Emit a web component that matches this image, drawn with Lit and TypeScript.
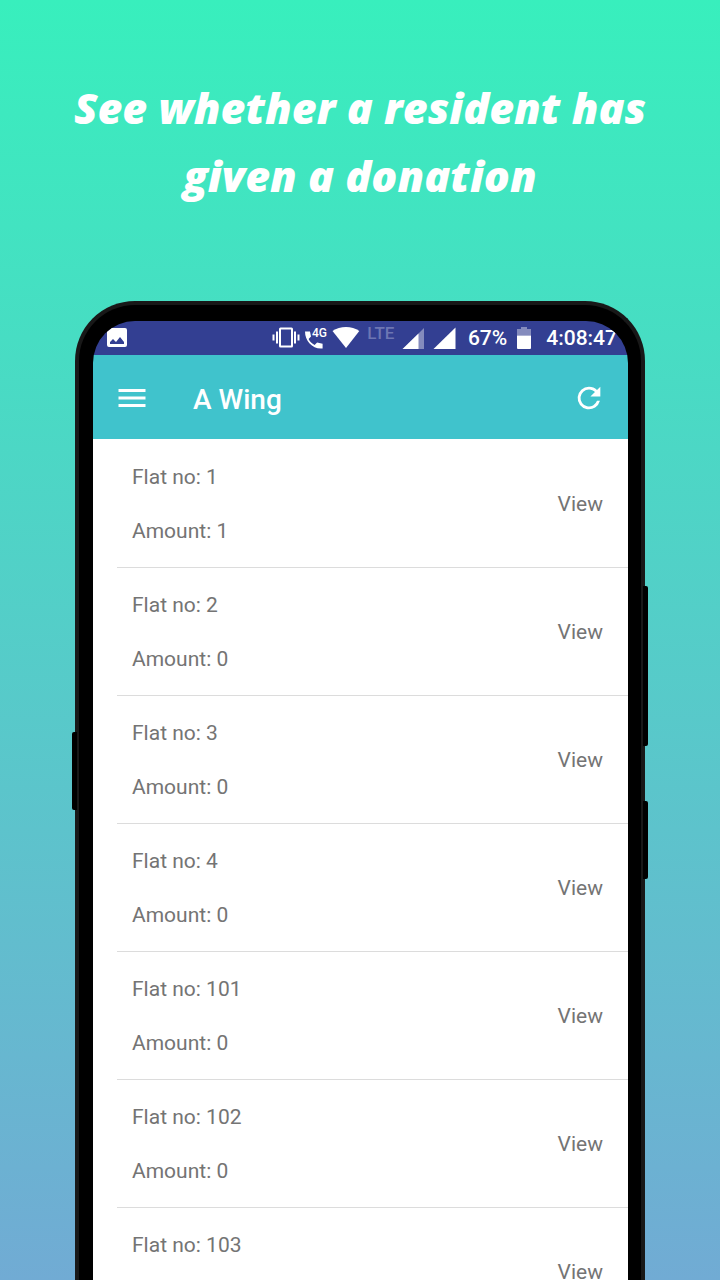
import { LitElement, html, css } from "lit";
import { customElement, property } from "lit/decorators.js";

interface Flat {
  no: string;
  amount: number;
}

const FLATS: Flat[] = [
  { no: "1", amount: 1 },
  { no: "2", amount: 0 },
  { no: "3", amount: 0 },
  { no: "4", amount: 0 },
  { no: "101", amount: 0 },
  { no: "102", amount: 0 },
  { no: "103", amount: 0 },
];

@customElement("status-bar")
class StatusBar extends LitElement {
  static styles = css`
    :host {
      display: flex;
      align-items: center;
      height: 34px;
      padding: 0 11px 0 14px;
      background: #333f92;
      color: #fff;
      font-size: 21px;
      font-weight: 500;
      line-height: 34px;
      white-space: nowrap;
    }
    svg {
      display: block;
      flex: none;
      fill: #fff;
    }
    .tray {
      display: flex;
      align-items: center;
      gap: 4px;
      margin-left: auto;
    }
    .lte {
      align-self: flex-start;
      width: 34px;
      line-height: 24px;
      text-align: center;
      font-size: 17px;
      color: #6d76b3;
    }
    .percent {
      padding: 0 5px 0 8px;
    }
    .time {
      padding-left: 10px;
    }
    .small {
      font-size: 12px;
      font-weight: 500;
    }
  `;

  render() {
    return html`
      <svg width="20" height="24" viewBox="0 0 20 24" aria-hidden="true">
        <path fill-rule="evenodd" d="M2 2h16a2 2 0 0 1 2 2v15a2 2 0 0 1-2 2H2a2 2 0 0 1-2-2V4a2 2 0 0 1 2-2zM3 18h14v-2l-4-5-4 5-3-3-3 3z" />
      </svg>
      <div class="tray">
        <svg width="28" height="24" viewBox="0 0 28 24" aria-hidden="true">
          <path fill-rule="evenodd" d="M8.500 1.500h11a1.500 1.500 0 0 1 1.500 1.500v17a1.500 1.500 0 0 1-1.500 1.500h-11A1.500 1.500 0 0 1 7 20V3a1.500 1.500 0 0 1 1.500-1.500zM9 3.500v16h10v-16z" />
          <path d="M4 5.500h2v12H4zM.5 8.500h2v6h-2zM22 5.500h2v12h-2zM25.500 8.500h2v6h-2z" />
        </svg>
        <svg width="24" height="24" viewBox="0 0 24 24" aria-hidden="true">
          <path d="M1 5.500h5l1 5-2.400 2.600c1.400 2.800 3.300 4.600 6 6l2.500-2.500 5.500 1.200v4.600C9 23.500 1 15.500 1 5.500z" />
          <text class="small" x="8" y="11">4G</text>
        </svg>
        <svg width="28" height="24" viewBox="0 0 28 24" aria-hidden="true">
          <path d="M.5 5C8-.5 20-.5 27.300 5L14 22z" />
        </svg>
        <span class="lte">LTE</span>
        <svg width="24" height="24" viewBox="0 0 24 24" aria-hidden="true">
          <path opacity=".4" d="M22 2v21H1z" />
          <path d="M16.500 7.500V23H.5z" />
        </svg>
        <svg width="26" height="24" viewBox="0 0 26 24" aria-hidden="true">
          <path d="M25.500 1.500V23H3.500z" />
        </svg>
        <span class="percent">67%</span>
        <svg width="16" height="24" viewBox="0 0 16 24" aria-hidden="true">
          <path opacity=".4" d="M5 1h6v2h4v6.500H1V3h4z" />
          <path d="M1 9.500h14V22a1 1 0 0 1-1 1H2a1 1 0 0 1-1-1z" />
        </svg>
        <span class="time">4:08:47</span>
      </div>
    `;
  }
}

@customElement("wing-bar")
class WingBar extends LitElement {
  @property() name = "";

  static styles = css`
    :host {
      display: flex;
      align-items: center;
      height: 84px;
      padding: 0 22px;
      background: #40c3cc;
      color: #fff;
    }
    .title {
      flex: 1;
      margin: 6px 0 0 44px;
      font-size: 28px;
      font-weight: 500;
      line-height: 36px;
    }
    .icon {
      display: block;
      padding: 2px 0 0;
      border: 0;
      background: none;
      color: inherit;
      cursor: pointer;
    }
    svg {
      display: block;
      fill: currentColor;
    }
  `;

  render() {
    return html`
      <button class="icon" aria-label="Open menu">
        <svg width="34" height="34" viewBox="0 0 34 34">
          <path d="M3.500 8h27v3h-27zM3.500 15.500h27v3h-27zM3.500 23h27v3h-27z" />
        </svg>
      </button>
      <h2 class="title">${this.name}</h2>
      <button class="icon" aria-label="Refresh">
        <svg width="34" height="34" viewBox="0 0 24 24">
          <path d="M17.650 6.350A7.958 7.958 0 0 0 12 4a8 8 0 1 0 7.730 10h-2.080A6 6 0 1 1 12 6c1.660 0 3.140.69 4.220 1.780L13 11h7V4z" />
        </svg>
      </button>
    `;
  }
}

@customElement("flat-list")
class FlatList extends LitElement {
  @property({ attribute: false }) flats: Flat[] = [];

  static styles = css`
    :host {
      display: block;
      background: #fff;
      color: #747474;
    }
    .list {
      margin: 0;
      padding: 0 0 0 24px;
      list-style: none;
    }
    .row {
      display: flex;
      align-items: center;
      justify-content: space-between;
      box-sizing: border-box;
      height: 128px;
      padding: 0 25px 0 15px;
      border-top: 1px solid #dcdcdc;
      font-size: 21px;
      line-height: 54px;
    }
    .row:first-child {
      border-top-color: transparent;
    }
    .line {
      margin: 0;
    }
    .view {
      padding: 0;
      border: 0;
      background: none;
      color: inherit;
      font: inherit;
      cursor: pointer;
    }
  `;

  render() {
    return html`
      <ul class="list">
        ${this.flats.map(
          (flat) => html`
            <li class="row">
              <div>
                <p class="line">Flat no: ${flat.no}</p>
                <p class="line">Amount: ${flat.amount}</p>
              </div>
              <button class="view">View</button>
            </li>
          `
        )}
      </ul>
    `;
  }
}

@customElement("app-root")
class AppRoot extends LitElement {
  static styles = css`
    :host {
      display: flex;
      flex-direction: column;
      box-sizing: border-box;
      height: 100vh;
      overflow: hidden;
      padding: 74px 75px 0;
      background: linear-gradient(#38efbd, #71abd4);
      font-family: Roboto, "Noto Sans", sans-serif;
    }
    .headline {
      margin: 0 -20px 91px;
      color: #fff;
      font-family: "Open Sans", Lato, sans-serif;
      font-size: 43px;
      font-style: italic;
      font-weight: 800;
      line-height: 68px;
      text-align: center;
    }
    .phone {
      position: relative;
      flex: none;
      padding: 16px 13px 0 14px;
      border: 4px solid #181818;
      border-bottom: 0;
      border-radius: 60px 60px 0 0;
      background: #000;
    }
    .screen {
      overflow: hidden;
      border-radius: 42px 42px 0 0;
    }
    .key {
      position: absolute;
      width: 5px;
      background: #000;
    }
    .mute {
      top: 427px;
      left: -7px;
      height: 78px;
      border-radius: 2px 0 0 2px;
    }
    .volume {
      top: 281px;
      right: -7px;
      height: 160px;
      border-radius: 0 2px 2px 0;
    }
    .power {
      top: 496px;
      right: -7px;
      height: 78px;
      border-radius: 0 2px 2px 0;
    }
  `;

  render() {
    return html`
      <h1 class="headline">See whether a resident has given a donation</h1>
      <main class="phone">
        <span class="key mute"></span>
        <span class="key volume"></span>
        <span class="key power"></span>
        <div class="screen">
          <status-bar></status-bar>
          <wing-bar name="A Wing"></wing-bar>
          <flat-list .flats=${FLATS}></flat-list>
        </div>
      </main>
    `;
  }
}
